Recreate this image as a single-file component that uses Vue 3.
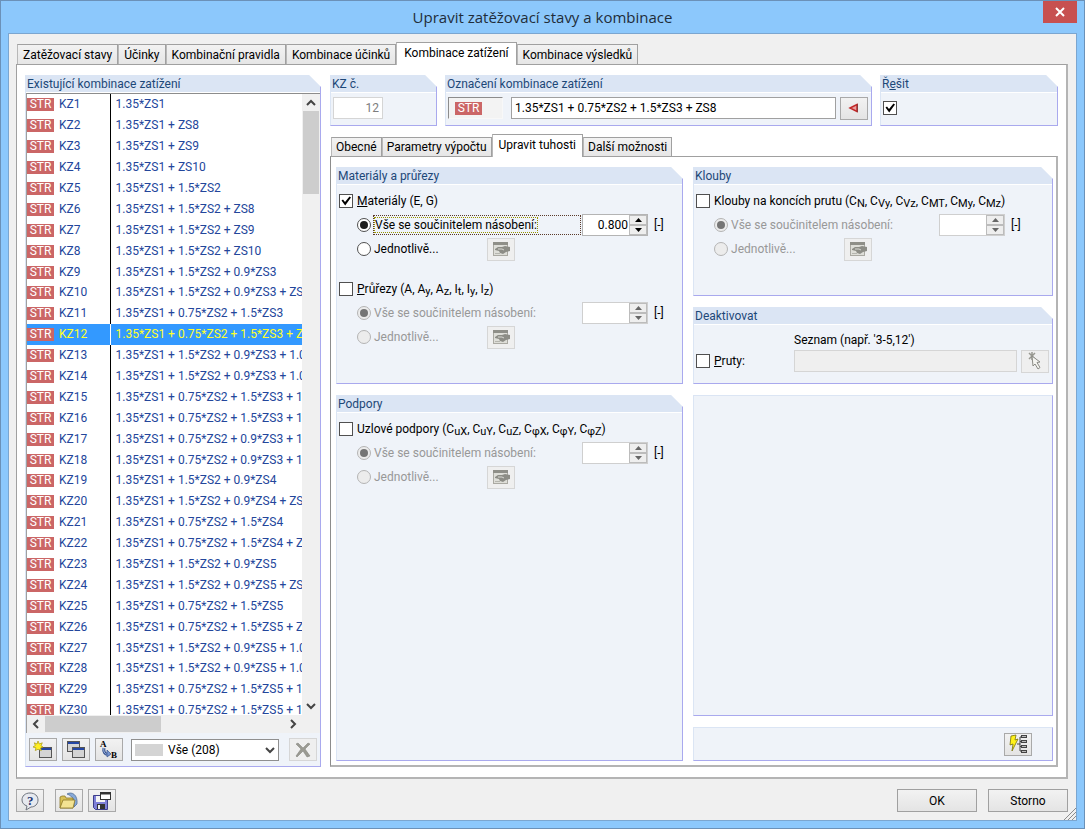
<script setup>
import { ref } from 'vue'

const tabs = [
  'Zatěžovací stavy',
  'Účinky',
  'Kombinační pravidla',
  'Kombinace účinků',
  'Kombinace zatížení',
  'Kombinace výsledků'
]
const activeTab = ref(4)

const innerTabs = ['Obecné', 'Parametry výpočtu', 'Upravit tuhosti', 'Další možnosti']
const activeInnerTab = ref(2)

const combinations = [
  '1.35*ZS1',
  '1.35*ZS1 + ZS8',
  '1.35*ZS1 + ZS9',
  '1.35*ZS1 + ZS10',
  '1.35*ZS1 + 1.5*ZS2',
  '1.35*ZS1 + 1.5*ZS2 + ZS8',
  '1.35*ZS1 + 1.5*ZS2 + ZS9',
  '1.35*ZS1 + 1.5*ZS2 + ZS10',
  '1.35*ZS1 + 1.5*ZS2 + 0.9*ZS3',
  '1.35*ZS1 + 1.5*ZS2 + 0.9*ZS3 + ZS8',
  '1.35*ZS1 + 0.75*ZS2 + 1.5*ZS3',
  '1.35*ZS1 + 0.75*ZS2 + 1.5*ZS3 + ZS8',
  '1.35*ZS1 + 1.5*ZS2 + 0.9*ZS3 + 1.05*ZS4',
  '1.35*ZS1 + 1.5*ZS2 + 0.9*ZS3 + 1.05*ZS5',
  '1.35*ZS1 + 0.75*ZS2 + 1.5*ZS3 + 1.05*ZS4',
  '1.35*ZS1 + 0.75*ZS2 + 1.5*ZS3 + 1.05*ZS5',
  '1.35*ZS1 + 0.75*ZS2 + 0.9*ZS3 + 1.5*ZS4',
  '1.35*ZS1 + 0.75*ZS2 + 0.9*ZS3 + 1.5*ZS5',
  '1.35*ZS1 + 1.5*ZS2 + 0.9*ZS4',
  '1.35*ZS1 + 1.5*ZS2 + 0.9*ZS4 + ZS8',
  '1.35*ZS1 + 0.75*ZS2 + 1.5*ZS4',
  '1.35*ZS1 + 0.75*ZS2 + 1.5*ZS4 + ZS8',
  '1.35*ZS1 + 1.5*ZS2 + 0.9*ZS5',
  '1.35*ZS1 + 1.5*ZS2 + 0.9*ZS5 + ZS8',
  '1.35*ZS1 + 0.75*ZS2 + 1.5*ZS5',
  '1.35*ZS1 + 0.75*ZS2 + 1.5*ZS5 + ZS8',
  '1.35*ZS1 + 1.5*ZS2 + 0.9*ZS5 + 1.05*ZS6',
  '1.35*ZS1 + 1.5*ZS2 + 0.9*ZS5 + 1.05*ZS7',
  '1.35*ZS1 + 0.75*ZS2 + 1.5*ZS5 + 1.05*ZS6',
  '1.35*ZS1 + 0.75*ZS2 + 1.5*ZS5 + 1.05*ZS7'
]
const selected = ref(11)
const description = ref('1.35*ZS1 + 0.75*ZS2 + 1.5*ZS3 + ZS8')
const solve = ref(true)
const members = ref(false)

// symbols are pairs of a letter and its lowered index
const stiffness = ref([
  {
    column: 'left',
    title: 'Materiály a průřezy',
    items: [
      { id: 'mat', key: 'M', rest: 'ateriály', symbols: [['E', ''], ['G', '']], on: true, mode: 'all', value: '0.800' },
      { id: 'sec', key: 'P', rest: 'růřezy', symbols: [['A', ''], ['A', 'y'], ['A', 'z'], ['I', 't'], ['I', 'y'], ['I', 'z']], on: false, mode: 'all', value: '' }
    ]
  },
  {
    column: 'left',
    title: 'Podpory',
    items: [
      { id: 'sup', key: '', rest: 'Uzlové podpory', symbols: [['C', 'uX'], ['C', 'uY'], ['C', 'uZ'], ['C', 'φX'], ['C', 'φY'], ['C', 'φZ']], on: false, mode: 'all', value: '' }
    ]
  },
  {
    column: 'right',
    title: 'Klouby',
    items: [
      { id: 'hin', key: '', rest: 'Klouby na koncích prutu', symbols: [['C', 'N'], ['C', 'Vy'], ['C', 'Vz'], ['C', 'MT'], ['C', 'My'], ['C', 'Mz']], on: false, mode: 'all', value: '' }
    ]
  }
])

const groupsOf = column => stiffness.value.filter(g => g.column == column)

const step = (item, by) => {
  item.value = (Number(item.value) + by).toFixed(3)
}
</script>

<template>
  <div class="window">
    <header class="titlebar">
      <h1>Upravit zatěžovací stavy a kombinace</h1>
      <button class="close" aria-label="Zavřít">
        <svg width="10" height="10" viewBox="0 0 10 10"><path d="M1 1l8 8M9 1l-8 8" stroke="#fff" stroke-width="2" /></svg>
      </button>
    </header>

    <main class="client">
      <nav class="tabs">
        <button v-for="(tab, i) in tabs" :key="tab" :class="['tab', { active: activeTab == i }]" @click="activeTab = i">{{ tab }}</button>
      </nav>

      <section class="page">
        <!-- list of combinations -->
        <div class="panel list-panel">
          <h2>Existující kombinace zatížení</h2>
          <div class="list">
            <div class="list-view">
              <table>
                <tbody>
                  <tr v-for="(text, i) in combinations" :key="i" :class="{ selected: selected == i }" @click="selected = i">
                    <td class="name"><span class="str">STR</span>KZ{{ i + 1 }}</td>
                    <td class="formula">{{ text }}</td>
                  </tr>
                </tbody>
              </table>
            </div>
            <div class="vscroll">
              <svg width="10" height="17" viewBox="0 0 10 17"><path d="M1 11l4-4 4 4" class="chev" /></svg>
              <div class="vthumb"></div>
              <svg width="10" height="17" viewBox="0 0 10 17"><path d="M1 6l4 4 4-4" class="chev" /></svg>
            </div>
            <div class="hscroll">
              <svg width="18" height="16" viewBox="0 0 18 16"><path d="M11 4L7 8l4 4" class="chev" /></svg>
              <div class="hthumb"></div>
              <svg width="18" height="16" viewBox="0 0 18 16"><path d="M7 4l4 4-4 4" class="chev" /></svg>
            </div>
          </div>
          <div class="list-tools">
            <button class="tool" aria-label="Nová">
              <svg width="20" height="20" viewBox="0 0 20 20">
                <rect x="6.500" y="7.500" width="12" height="10" fill="#d4d4d4" stroke="#555" />
                <path d="M7 9h11" stroke="#2446a4" stroke-width="2" />
                <path d="M5 1l1.300 3 3-1.200-1.300 3 2 1.200-2.500 1 .8 2.500L5 9.300 2.200 10.500l.8-2.700L0 7l2.300-1.500L1.300 2.800 4 4z" fill="#ffee22" stroke="#a89a10" stroke-width=".7" />
              </svg>
            </button>
            <button class="tool" aria-label="Kopírovat">
              <svg width="20" height="20" viewBox="0 0 20 20">
                <rect x="1.500" y="1.500" width="12" height="10" fill="#d4d4d4" stroke="#555" />
                <path d="M2 3h11" stroke="#2446a4" stroke-width="2" />
                <rect x="6.500" y="7.500" width="12" height="10" fill="#d4d4d4" stroke="#555" />
                <path d="M7 9h11" stroke="#2446a4" stroke-width="2" />
              </svg>
            </button>
            <button class="tool" aria-label="Přečíslovat">
              <svg width="20" height="20" viewBox="0 0 20 20">
                <text x="1" y="7" class="glyph">A</text>
                <text x="12" y="18" class="glyph">B</text>
                <path d="M5 8c-1 4 1 7 5 6" fill="none" stroke="#36538f" stroke-width="3" />
                <path d="M5 8c-1 4 1 7 5 6" fill="none" stroke="#a9bde6" stroke-width="1" />
                <path d="M8 10l4 4-4 3z" fill="#7795cf" stroke="#36538f" stroke-width=".7" />
              </svg>
            </button>
            <div class="filter">
              <span class="swatch"></span>
              <select aria-label="Filtr">
                <option>Vše (208)</option>
              </select>
              <svg width="10" height="8" viewBox="0 0 10 8"><path d="M1 2l4 4 4-4" class="chev" /></svg>
            </div>
            <button class="tool off" aria-label="Smazat" disabled>
              <svg width="18" height="18" viewBox="0 0 18 18"><path d="M2 3l2-1 5 5 5-5 2 1-5 5 5 7-3 1-4-6-6 6-1-1 5-7z" fill="#9a9a92" stroke="#7c7c76" stroke-width=".5" /></svg>
            </button>
          </div>
        </div>

        <div class="detail">
          <div class="heads">
            <div class="panel number">
              <h2><label for="kz">KZ č.</label></h2>
              <div class="head-body"><input id="kz" class="field" value="12" disabled></div>
            </div>
            <div class="panel naming">
              <h2><label for="desc">Označení kombinace zatížení</label></h2>
              <div class="head-body">
                <span class="type"><span class="str">STR</span></span>
                <input id="desc" class="field" v-model="description">
                <button class="tool" aria-label="Vložit">
                  <svg width="12" height="12" viewBox="0 0 12 12"><path d="M2 6l7-3.500v7z" fill="#eba0a0" stroke="#c22b2b" stroke-width="1.500" /><path d="M9.500 2v8" stroke="#8c3c3c" /></svg>
                </button>
              </div>
            </div>
            <div class="panel solve">
              <h2><label for="solve">Ř<u>e</u>šit</label></h2>
              <div class="head-body"><input id="solve" type="checkbox" v-model="solve"></div>
            </div>
          </div>

          <nav class="tabs inner">
            <button v-for="(tab, i) in innerTabs" :key="tab" :class="['tab', { active: activeInnerTab == i }]" @click="activeInnerTab = i">{{ tab }}</button>
          </nav>

          <section class="page inner-page">
            <div v-for="column in ['left', 'right']" :key="column" :class="['column', column]">
              <div v-for="group in groupsOf(column)" :key="group.title" class="panel group">
                <h2>{{ group.title }}</h2>
                <div class="group-body">
                  <fieldset v-for="item in group.items" :key="item.id" :class="{ idle: !item.on }">
                    <div class="row">
                      <input :id="item.id" type="checkbox" v-model="item.on">
                      <label :for="item.id"><u>{{ item.key }}</u>{{ item.rest }} (<template v-for="(s, i) in item.symbols" :key="i">{{ i ? ', ' : '' }}{{ s[0] }}<sub>{{ s[1] }}</sub></template>)</label>
                    </div>
                    <div class="row sub-row">
                      <div class="choice wide">
                        <input :id="item.id + '-all'" type="radio" :name="item.id + '-mode'" value="all" v-model="item.mode" :disabled="!item.on">
                        <label :for="item.id + '-all'" :class="{ focus: item.on }"><span>Vše se součinitelem násobení:</span></label>
                      </div>
                      <div class="spinner">
                        <input v-model="item.value" :disabled="!item.on" aria-label="Součinitel">
                        <div class="steps">
                          <button aria-label="Zvýšit" :disabled="!item.on" @click="step(item, 0.1)"><svg width="7" height="4" viewBox="0 0 7 4"><path d="M0 4l3.500-4L7 4z" /></svg></button>
                          <button aria-label="Snížit" :disabled="!item.on" @click="step(item, -0.1)"><svg width="7" height="4" viewBox="0 0 7 4"><path d="M0 0l3.500 4L7 0z" /></svg></button>
                        </div>
                      </div>
                      <span class="unit">[-]</span>
                    </div>
                    <div class="row sub-row">
                      <div class="choice">
                        <input :id="item.id + '-each'" type="radio" :name="item.id + '-mode'" value="each" v-model="item.mode" :disabled="!item.on">
                        <label :for="item.id + '-each'">Jednotlivě...</label>
                      </div>
                      <button class="tool off" aria-label="Upravit jednotlivě" disabled>
                        <svg width="18" height="16" viewBox="0 0 18 16">
                          <rect x="1.500" y="1.500" width="14" height="13" fill="#deded8" stroke="#aaa9a2" />
                          <path d="M1 2.500h15" stroke="#8f8f88" stroke-width="3" />
                          <path d="M3 8l3-2h4l3-1 5 1v4l-4 1-3 2-3-1-1-2-4-1z" fill="#8d8d86" />
                          <path d="M6 8l4 0 2 1" fill="none" stroke="#d8d8d2" />
                          <path d="M3 12.500h5" stroke="#b5b5ae" />
                        </svg>
                      </button>
                    </div>
                  </fieldset>
                </div>
              </div>

              <template v-if="column == 'right'">
                <div class="panel deactivate">
                  <h2>Deaktivovat</h2>
                  <div class="members">
                    <label class="hint" for="members-list">Seznam (např. '3-5,12')</label>
                    <div class="row">
                      <input id="members" type="checkbox" v-model="members">
                      <label for="members"><u>P</u>ruty:</label>
                    </div>
                    <input id="members-list" class="field" disabled>
                    <button class="tool off" aria-label="Vybrat pruty" disabled>
                      <svg width="16" height="18" viewBox="0 0 16 18">
                        <path d="M2 1l6 6M8 1L2 7M5 0v8" stroke="#999992" stroke-width="1.500" />
                        <path d="M5 4l8 6-3 .5 3 5-2 1.500-3-5-2 2z" fill="#f4f4f0" stroke="#8a8a84" />
                      </svg>
                    </button>
                  </div>
                </div>
                <div class="panel plain blank"></div>
                <div class="panel plain actions">
                  <button class="tool" aria-label="Nastavení výpočtu">
                    <svg width="20" height="20" viewBox="0 0 20 20">
                      <path d="M3 2l5-1-1 5 3-1-6 12 1-7-3 1z" fill="#fff21a" stroke="#77720c" stroke-width=".8" />
                      <path d="M9 10h3M14 3h-2v14h2M12 7.500h2M12 12.500h2" fill="none" stroke="#444" />
                      <g fill="#bbb" stroke="#444"><rect x="13.500" y="1.500" width="5" height="2" /><rect x="13.500" y="6.500" width="5" height="2" /><rect x="13.500" y="11.500" width="5" height="2" /><rect x="13.500" y="16.500" width="5" height="2" /></g>
                    </svg>
                  </button>
                </div>
              </template>
            </div>
          </section>
        </div>
      </section>

      <footer class="footer">
        <button class="tool" aria-label="Nápověda">
          <svg width="20" height="20" viewBox="0 0 20 20">
            <path d="M10 2c5 0 8 3 8 7s-3 7-7 7l-5 3 1-4c-3-1-5-3-5-6 0-4 3-7 8-7z" fill="#e6e9ef" stroke="#6e747e" />
            <text x="7" y="14" class="glyph question">?</text>
          </svg>
        </button>
        <button class="tool open" aria-label="Načíst">
          <svg width="20" height="20" viewBox="0 0 20 20">
            <path d="M8 3c5-3 11 1 10 10l-3 3c1-6-1-11-7-13z" fill="#86a9d8" stroke="#49658e" stroke-width=".7" />
            <path d="M1 17V6l2-1h3l1 2h7v10z" fill="#d9c155" stroke="#8a7626" stroke-width=".8" />
            <path d="M1 17l3-8h12l-2 8z" fill="#f3e392" stroke="#8a7626" stroke-width=".8" />
          </svg>
        </button>
        <button class="tool" aria-label="Uložit">
          <svg width="20" height="20" viewBox="0 0 20 20">
            <path d="M1.500 4.500h14v14h-12l-2-2z" fill="#7f80d8" stroke="#3d3e8a" />
            <rect x="4" y="5" width="9" height="6" fill="#f4f4f4" />
            <rect x="5" y="13" width="8" height="5" fill="#333" />
            <rect x="6" y="14" width="2" height="4" fill="#eee" />
            <rect x="8.500" y="1.500" width="10" height="7" fill="#fff" stroke="#333" />
            <path d="M8 2.500h11" stroke="#333" stroke-width="2" />
          </svg>
        </button>
        <div class="spacer"></div>
        <button class="push">OK</button>
        <button class="push">Storno</button>
        <svg class="grip" width="12" height="12" viewBox="0 0 12 12"><path d="M0 12L12 0M4 12l8-8M8 12l4-4" stroke="#8c8c8c" /></svg>
      </footer>
    </main>
  </div>
</template>

<style>
body {
  margin: 0;
}
</style>

<style scoped>
* {
  box-sizing: border-box;
}
.window {
  display: flex;
  flex-direction: column;
  height: 100vh;
  padding: 0 7px 7px;
  border: 1px solid #6b91b8;
  background: #8cc8fc;
  font-family: Roboto, "Liberation Sans", sans-serif;
  font-size: 12px;
  line-height: 14px;
  color: #000;
}
button, input, select {
  font: inherit;
  color: inherit;
  margin: 0;
  padding: 0;
}
.titlebar {
  display: flex;
  flex: none;
  align-items: center;
  justify-content: center;
  position: relative;
  height: 32px;
}
h1 {
  margin: 0;
  font-family: "Open Sans", sans-serif;
  font-size: 15px;
  font-weight: 400;
  line-height: 20px;
  color: #1f2d3a;
}
.close {
  position: absolute;
  top: 0;
  right: 0;
  display: flex;
  align-items: center;
  justify-content: center;
  width: 34px;
  height: 22px;
  border: 0;
  background: #c75050;
}

.client {
  display: flex;
  flex: 1;
  flex-direction: column;
  min-height: 0;
  padding: 7px 8px 0 7px;
  border: 1px solid #7ba6d0;
  background: #f0f0f0;
}
.tabs {
  display: flex;
  flex: none;
  align-items: flex-end;
  height: 23px;
  padding-left: 1px;
}
.tab {
  height: 20px;
  padding: 0 5px;
  border: 1px solid #a0a0a0;
  border-bottom: 0;
  border-left-color: #b8b8b8;
  background: linear-gradient(#f2f2f2, #e6e6e6);
  white-space: nowrap;
}
.tab.active {
  z-index: 1;
  height: 23px;
  margin-bottom: -1px;
  padding: 0 7px 3px;
  background: #fff;
}
.page {
  display: flex;
  flex: 1;
  gap: 9px;
  min-height: 0;
  padding: 10px 8px;
  border: 1px solid #a0a0a0;
  border-right: 2px solid #b4b4b4;
  border-bottom: 2px solid #b4b4b4;
  background: #fff;
}

.panel {
  display: flex;
  flex-direction: column;
  border: 1px solid #dbe5f4;
  border-top: 0;
  border-right-color: #a9a9ee;
  border-bottom-color: #a9a9ee;
  background: #eff3f9;
  clip-path: polygon(0 0, calc(100% - 12px) 0, 100% 12px, 100% 100%, 0 100%);
}
.panel.plain {
  border-top: 1px solid #dbe5f4;
  clip-path: none;
}
h2 {
  flex: none;
  height: 18px;
  margin: 0;
  padding: 2px 1px;
  border-bottom: 1px solid #fff;
  background: #dbe5f4;
  font-size: 12px;
  font-weight: 400;
  line-height: 14px;
  color: #1d4878;
}

.list-panel {
  flex: none;
  width: 296px;
}
.list {
  display: grid;
  flex: 1;
  grid-template-columns: minmax(0, 1fr) 18px;
  grid-template-rows: minmax(0, 1fr) 18px;
  min-height: 0;
  border-top: 1px solid #8c8c8c;
  border-left: 1px solid #a0a0a0;
  background: #fff;
}
.list-view {
  overflow: hidden;
}
table {
  width: 100%;
  height: 627px;
  border-collapse: collapse;
  table-layout: fixed;
  color: #23469b;
}
td {
  padding: 0;
  white-space: nowrap;
}
.name {
  width: 83px;
  border-right: 1px solid #000;
}
.formula {
  padding-left: 5px;
}
.selected {
  background: #3399ff;
  color: #ffff2a;
}
.selected .name {
  border-right-color: #fff;
}
.str {
  display: inline-block;
  width: 27px;
  height: 13px;
  margin-right: 5px;
  background: #cb6666;
  line-height: 13px;
  text-align: center;
  color: #fff;
}
.vscroll {
  display: flex;
  flex-direction: column;
  align-items: center;
  background: #f0f0f0;
}
.vthumb {
  width: 16px;
  height: 83px;
  margin-bottom: auto;
  background: #cdcdcd;
}
.hscroll {
  display: flex;
  grid-column: 1 / 3;
  align-items: center;
  padding-right: 18px;
  background: #f0f0f0;
}
.hthumb {
  width: 116px;
  height: 16px;
  margin-right: auto;
  background: #cdcdcd;
}
.chev {
  fill: none;
  stroke: #444;
  stroke-width: 2;
}
.list-tools {
  display: flex;
  flex: none;
  gap: 5px;
  align-items: center;
  height: 33px;
  padding: 0 3px;
}
.filter {
  display: flex;
  flex: 1;
  align-items: center;
  position: relative;
  height: 22px;
  margin: 0 5px 0 3px;
}
.filter select {
  width: 100%;
  height: 100%;
  padding-left: 36px;
  border: 1px solid #8f8f8f;
  border-radius: 0;
  background: #fff;
  appearance: none;
}
.filter .swatch {
  position: absolute;
  left: 4px;
  width: 28px;
  height: 12px;
  background: #d4d4d4;
}
.filter svg {
  position: absolute;
  right: 4px;
}
.glyph {
  font-family: "Liberation Serif", serif;
  font-size: 9px;
  font-weight: 700;
}
.question {
  font-size: 13px;
  fill: #1f3674;
}

.tool {
  display: flex;
  flex: none;
  align-items: center;
  justify-content: center;
  width: 28px;
  height: 23px;
  border: 1px solid #a9a9a9;
  background: linear-gradient(#f2f2f2, #e4e4e4);
}
.tool.off {
  border-color: #d6d6d6;
  background: #efefef;
}

.detail {
  display: flex;
  flex: 1;
  flex-direction: column;
  min-width: 0;
}
.heads {
  display: flex;
  flex: none;
  gap: 8px;
}
.heads .panel {
  height: 51px;
}
.number {
  width: 107px;
}
.naming {
  flex: 1;
}
.solve {
  width: 178px;
}
.head-body {
  display: flex;
  flex: 1;
  align-items: center;
  padding: 0 3px 2px 2px;
}
.field {
  height: 22px;
  padding: 0 3px;
  border: 1px solid #a0a0a0;
  background: #fff;
}
.field:disabled {
  border: 1px solid #d5d5d5;
  background: #efefef;
}
.number .field {
  width: 50px;
  background: #fff;
  text-align: right;
  color: #7d7d7d;
}
.naming .field {
  flex: 1;
  min-width: 0;
  margin: 0 4px 0 8px;
}
.type {
  display: flex;
  align-items: center;
  width: 55px;
  height: 22px;
  padding-left: 6px;
  border: 1px solid #f8f8f8;
  border-top-color: #8c8c8c;
  border-left-color: #8c8c8c;
  background: #f3f3f3;
}
.type .str {
  margin: 0;
}

.inner {
  margin-top: 7px;
}
.inner .tab {
  height: 19px;
  padding: 0 4px;
}
.inner .tab.active {
  height: 23px;
  padding: 0 6px 3px;
}
.inner-page {
  gap: 10px;
  padding: 10px 3px 4px 5px;
  border-left-color: #8c8c8c;
}
.column {
  display: flex;
  flex-direction: column;
  gap: 11px;
}
.left {
  flex: 348;
}
.right {
  flex: 361;
}
.left .group:last-child, .blank {
  flex: 1;
}
.left .group:first-child {
  height: 217px;
}
.right .group {
  height: 129px;
}
.group-body {
  display: flex;
  flex-direction: column;
  gap: 16px;
  padding: 4px 2px;
}
fieldset {
  margin: 0;
  padding: 0;
  border: 0;
}
.row {
  display: flex;
  align-items: center;
  height: 24px;
  white-space: nowrap;
}
.row > label {
  margin-left: 4px;
}
.sub-row {
  padding-left: 18px;
}
sub {
  font-size: 11px;
  line-height: 0;
  vertical-align: -2px;
}
.choice {
  display: flex;
  align-items: center;
  width: 130px;
}
.choice label {
  margin-left: 3px;
}
.choice.wide {
  width: 225px;
}
.choice .focus {
  flex: 1;
  margin-right: 1px;
  margin-left: 2px;
  padding: 2px 1px;
  border: 1px dotted #5a3a2a;
}
.focus span {
  display: inline-block;
  outline: 1px dotted #9a9400;
}
.idle .choice {
  color: #989898;
}
.spinner {
  display: flex;
  width: 66px;
  height: 22px;
  border: 1px solid #b4b4b4;
  background: #fff;
}
.idle .spinner {
  border-color: #cfcfcf;
}
.spinner input {
  flex: 1;
  width: 0;
  padding-right: 1px;
  border: 0;
  background: #fff;
  text-align: right;
}
.steps {
  display: flex;
  flex-direction: column;
  width: 18px;
  background: #f0f0f0;
}
.steps button {
  display: flex;
  flex: 1;
  align-items: center;
  justify-content: center;
  border: 1px solid #bcbcbc;
  background: #eee;
}
.idle .steps svg {
  fill: #666;
}
.unit {
  margin-left: 6px;
}

input[type=checkbox], input[type=radio] {
  display: flex;
  flex: none;
  align-items: center;
  justify-content: center;
  width: 14px;
  height: 14px;
  border: 1px solid #505050;
  background: #fff;
  appearance: none;
}
input[type=radio] {
  border-radius: 50%;
}
input[type=checkbox]:checked::before {
  content: "";
  width: 10px;
  height: 10px;
  background: #000;
  clip-path: polygon(5% 45%, 20% 35%, 40% 60%, 85% 5%, 100% 15%, 42% 95%);
}
input[type=radio]:checked::before {
  content: "";
  width: 8px;
  height: 8px;
  border-radius: 50%;
  background: #1c1c1c;
}
input[type=radio]:disabled {
  border-color: #b4b4b4;
  background: #ececec;
}
input[type=radio]:disabled::before {
  background: #757575;
}

.members {
  display: grid;
  flex: 1;
  grid-template-columns: 94px minmax(0, 1fr) 28px;
  grid-template-rows: 19px 24px;
  column-gap: 4px;
  align-items: center;
  padding: 5px 3px 4px 2px;
}
.deactivate {
  height: 77px;
}
.hint {
  grid-column: 2 / 4;
}
.actions {
  align-items: flex-end;
  justify-content: center;
  height: 34px;
  padding-right: 20px;
}

.footer {
  display: flex;
  flex: none;
  align-items: center;
  position: relative;
  height: 41px;
  padding-top: 2px;
}
.footer .tool {
  margin-right: 5px;
}
.footer .open {
  margin-left: 6px;
}
.spacer {
  flex: 1;
}
.push {
  width: 80px;
  height: 23px;
  margin-left: 11px;
  border: 1px solid #a0a0a0;
  background: linear-gradient(#f2f2f2, #e4e4e4);
}
.grip {
  position: absolute;
  right: -8px;
  bottom: 0;
}
</style>
